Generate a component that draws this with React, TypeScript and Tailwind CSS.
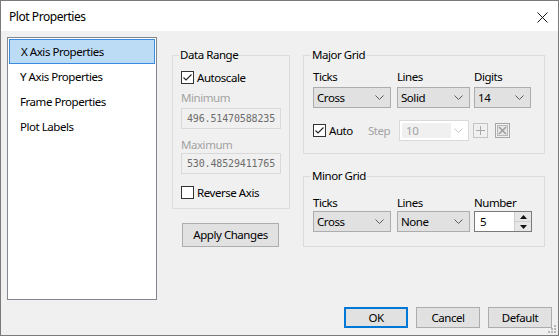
import React from "react";

const font = { fontFamily: '"Noto Sans", sans-serif' };
const mono = { fontFamily: '"DejaVu Sans Mono", monospace' };

function Chevron({ color = "#5a5a5a" }: { color?: string }) {
  return (
    <svg width="9" height="5" viewBox="0 0 9 5">
      <polyline points="0.5,0.5 4.5,4.5 8.5,0.5" fill="none" stroke={color} strokeWidth="1" />
    </svg>
  );
}

function Combo({ w, text }: { w: string; text: string }) {
  return (
    <div className={`${w} h-[21px] border border-[#adadad] bg-[#e1e1e1] flex items-center justify-between`}>
      <span className="pl-[3px] leading-none">{text}</span>
      <span className="w-[17px] flex justify-center mr-[2px]">
        <Chevron />
      </span>
    </div>
  );
}

function Check({ checked }: { checked: boolean }) {
  return (
    <svg width="13" height="13" viewBox="0 0 13 13" className="shrink-0">
      <rect x="0.5" y="0.5" width="12" height="12" fill="#fff" stroke="#333" />
      {checked && <polyline points="2.5,6.5 5,9 10.5,3.5" fill="none" stroke="#222" strokeWidth="1.1" />}
    </svg>
  );
}

function Group({ title, className, children }: { title: string; className: string; children: React.ReactNode }) {
  return (
    <fieldset className={`border border-[#dcdcdc] ${className}`}>
      <legend className="-ml-[2px] px-[1px] h-[16px] leading-[16px]">{title}</legend>
      {children}
    </fieldset>
  );
}

export default function App() {
  const items = ["X Axis Properties", "Y Axis Properties", "Frame Properties", "Plot Labels"];
  return (
    <div
      className="relative w-[559px] h-[336px] border border-[#7a7a7a] bg-[#f0f0f0] flex flex-col text-[11.5px] tracking-[-0.45px] text-black overflow-hidden"
      style={font}
    >
      {/* Title bar */}
      <div className="h-[30px] bg-white flex items-center justify-between shrink-0">
        <span className="ml-[8px] mt-[1px] text-[12px]">Plot Properties</span>
        <svg width="11" height="11" viewBox="0 0 11 11" className="mr-[10px] mt-[2px]">
          <line x1="0.5" y1="0.5" x2="10.5" y2="10.5" stroke="#111" strokeWidth="1" />
          <line x1="10.5" y1="0.5" x2="0.5" y2="10.5" stroke="#111" strokeWidth="1" />
        </svg>
      </div>

      {/* Body */}
      <div className="flex flex-col pl-[6px] pt-[6px]">
        <div className="flex h-[263px]">
          {/* List */}
          <div className="w-[150px] h-[263px] border border-[#828790] bg-white p-[1px] shrink-0">
            {items.map((t, i) => (
              <div
                key={t}
                className={`h-[25px] flex items-center pl-[11px] ${
                  i === 0 ? "bg-[#bcdbf5] border border-[#3a8be0] pl-[10px]" : ""
                }`}
              >
                {t}
              </div>
            ))}
          </div>

          {/* Middle column */}
          <div className="ml-[15px] mt-[10px] flex flex-col w-[118px]">
            <Group title="Data Range" className="w-[118px] pl-[8px] pb-[9px]">
              <div className="flex items-center mt-[8px] h-[13px]">
                <Check checked />
                <span className="ml-[3px]">Autoscale</span>
              </div>
              <div className="mt-[6px] h-[16px] leading-[16px] text-[#a3a3a3]">Minimum</div>
              <div
                className="mt-[2px] w-[100px] h-[21px] border border-[#d9d9d9] bg-[#f0f0f0] flex items-center pl-[5px] text-[#6d6d6d] text-[10px] tracking-[-0.15px]"
                style={mono}
              >
                496.51470588235
              </div>
              <div className="mt-[8px] h-[16px] leading-[16px] text-[#a3a3a3]">Maximum</div>
              <div
                className="mt-[0px] w-[100px] h-[21px] border border-[#d9d9d9] bg-[#f0f0f0] flex items-center pl-[5px] text-[#6d6d6d] text-[10px] tracking-[-0.15px]"
                style={mono}
              >
                530.48529411765
              </div>
              <div className="flex items-center mt-[12px] h-[13px]">
                <Check checked={false} />
                <span className="ml-[3px]">Reverse Axis</span>
              </div>
            </Group>
            <div className="ml-[10px] mt-[14px] w-[97px] h-[24px] border border-[#adadad] bg-[#e1e1e1] flex items-center justify-center">
              Apply Changes
            </div>
          </div>

          {/* Right column */}
          <div className="ml-[13px] mt-[10px] flex flex-col w-[242px]">
            <Group title="Major Grid" className="w-[242px] pl-[9px] pb-[12px]">
              <div className="flex mt-[6px] h-[16px] leading-[16px]">
                <span className="w-[84px]">Ticks</span>
                <span className="w-[77px]">Lines</span>
                <span>Digits</span>
              </div>
              <div className="flex mt-[2px]">
                <Combo w="w-[78px]" text="Cross" />
                <div className="w-[6px]" />
                <Combo w="w-[73px]" text="Solid" />
                <div className="w-[4px]" />
                <Combo w="w-[57px]" text="14" />
              </div>
              <div className="flex items-center mt-[12px] h-[21px]">
                <div className="w-[55px] flex items-center">
                  <Check checked />
                  <span className="ml-[3px]">Auto</span>
                </div>
                <span className="w-[31px] text-[#a3a3a3]">Step</span>
                <div className="w-[70px] h-[21px] border border-[#d9d9d9] bg-white flex items-center p-[2px]">
                  <div className="w-[49px] h-full bg-[#f0f0f0] flex items-center pl-[4px] text-[#a3a3a3]">10</div>
                  <span className="flex-1 flex justify-center">
                    <Chevron color="#c4c4c4" />
                  </span>
                </div>
                <svg width="15" height="15" viewBox="0 0 15 15" className="ml-[4px]">
                  <rect x="0.5" y="0.5" width="14" height="14" fill="#f0f0f0" stroke="#c4c4c4" />
                  <line x1="7.5" y1="3" x2="7.5" y2="12" stroke="#a8a8a8" />
                  <line x1="3" y1="7.5" x2="12" y2="7.5" stroke="#a8a8a8" />
                </svg>
                <svg width="15" height="15" viewBox="0 0 15 15" className="ml-[7px]">
                  <rect x="0.5" y="0.5" width="14" height="14" fill="#f0f0f0" stroke="#a6a6a6" />
                  <rect x="2.5" y="2.5" width="10" height="10" fill="#e6e6e6" stroke="#b8b8b8" />
                  <line x1="4" y1="4" x2="11" y2="11" stroke="#a0a0a0" strokeWidth="1.6" />
                  <line x1="11" y1="4" x2="4" y2="11" stroke="#a0a0a0" strokeWidth="1.6" />
                </svg>
              </div>
            </Group>

            <Group title="Minor Grid" className="mt-[14px] w-[242px] pl-[9px] pb-[14px]">
              <div className="flex mt-[11px] h-[16px] leading-[16px]">
                <span className="w-[84px]">Ticks</span>
                <span className="w-[77px]">Lines</span>
                <span>Number</span>
              </div>
              <div className="flex mt-[0px]">
                <Combo w="w-[78px]" text="Cross" />
                <div className="w-[6px]" />
                <Combo w="w-[73px]" text="None" />
                <div className="w-[4px]" />
                <div className="w-[58px] h-[21px] border border-[#7a7a7a] bg-white flex items-center justify-between">
                  <span className="pl-[5px]">5</span>
                  <div className="w-[17px] h-full flex flex-col border-l border-[#cfcfcf]">
                    <div className="flex-1 bg-[#e6e6e6] border-b border-[#cfcfcf] flex items-center justify-center">
                      <svg width="7" height="4" viewBox="0 0 7 4">
                        <polygon points="3.5,0 7,4 0,4" fill="#111" />
                      </svg>
                    </div>
                    <div className="flex-1 bg-[#e6e6e6] flex items-center justify-center">
                      <svg width="7" height="4" viewBox="0 0 7 4">
                        <polygon points="0,0 7,0 3.5,4" fill="#111" />
                      </svg>
                    </div>
                  </div>
                </div>
              </div>
            </Group>
          </div>
        </div>

        {/* Buttons */}
        <div className="flex justify-end gap-[8px] mt-[7px] pr-[6px]">
          <div className="w-[64px] h-[21px] border-2 border-[#0078d7] bg-[#e1e1e1] flex items-center justify-center">OK</div>
          <div className="w-[64px] h-[21px] border border-[#adadad] bg-[#e1e1e1] flex items-center justify-center">Cancel</div>
          <div className="w-[64px] h-[21px] border border-[#adadad] bg-[#e1e1e1] flex items-center justify-center">Default</div>
        </div>
      </div>

      {/* size grip */}
      <svg width="10" height="10" viewBox="0 0 10 10" className="absolute right-[1px] bottom-[1px]">
        <rect x="7" y="1" width="2" height="2" fill="#b8b8b8" />
        <rect x="4" y="4" width="2" height="2" fill="#b8b8b8" />
        <rect x="7" y="4" width="2" height="2" fill="#b8b8b8" />
        <rect x="1" y="7" width="2" height="2" fill="#b8b8b8" />
        <rect x="4" y="7" width="2" height="2" fill="#b8b8b8" />
        <rect x="7" y="7" width="2" height="2" fill="#b8b8b8" />
      </svg>
    </div>
  );
}
